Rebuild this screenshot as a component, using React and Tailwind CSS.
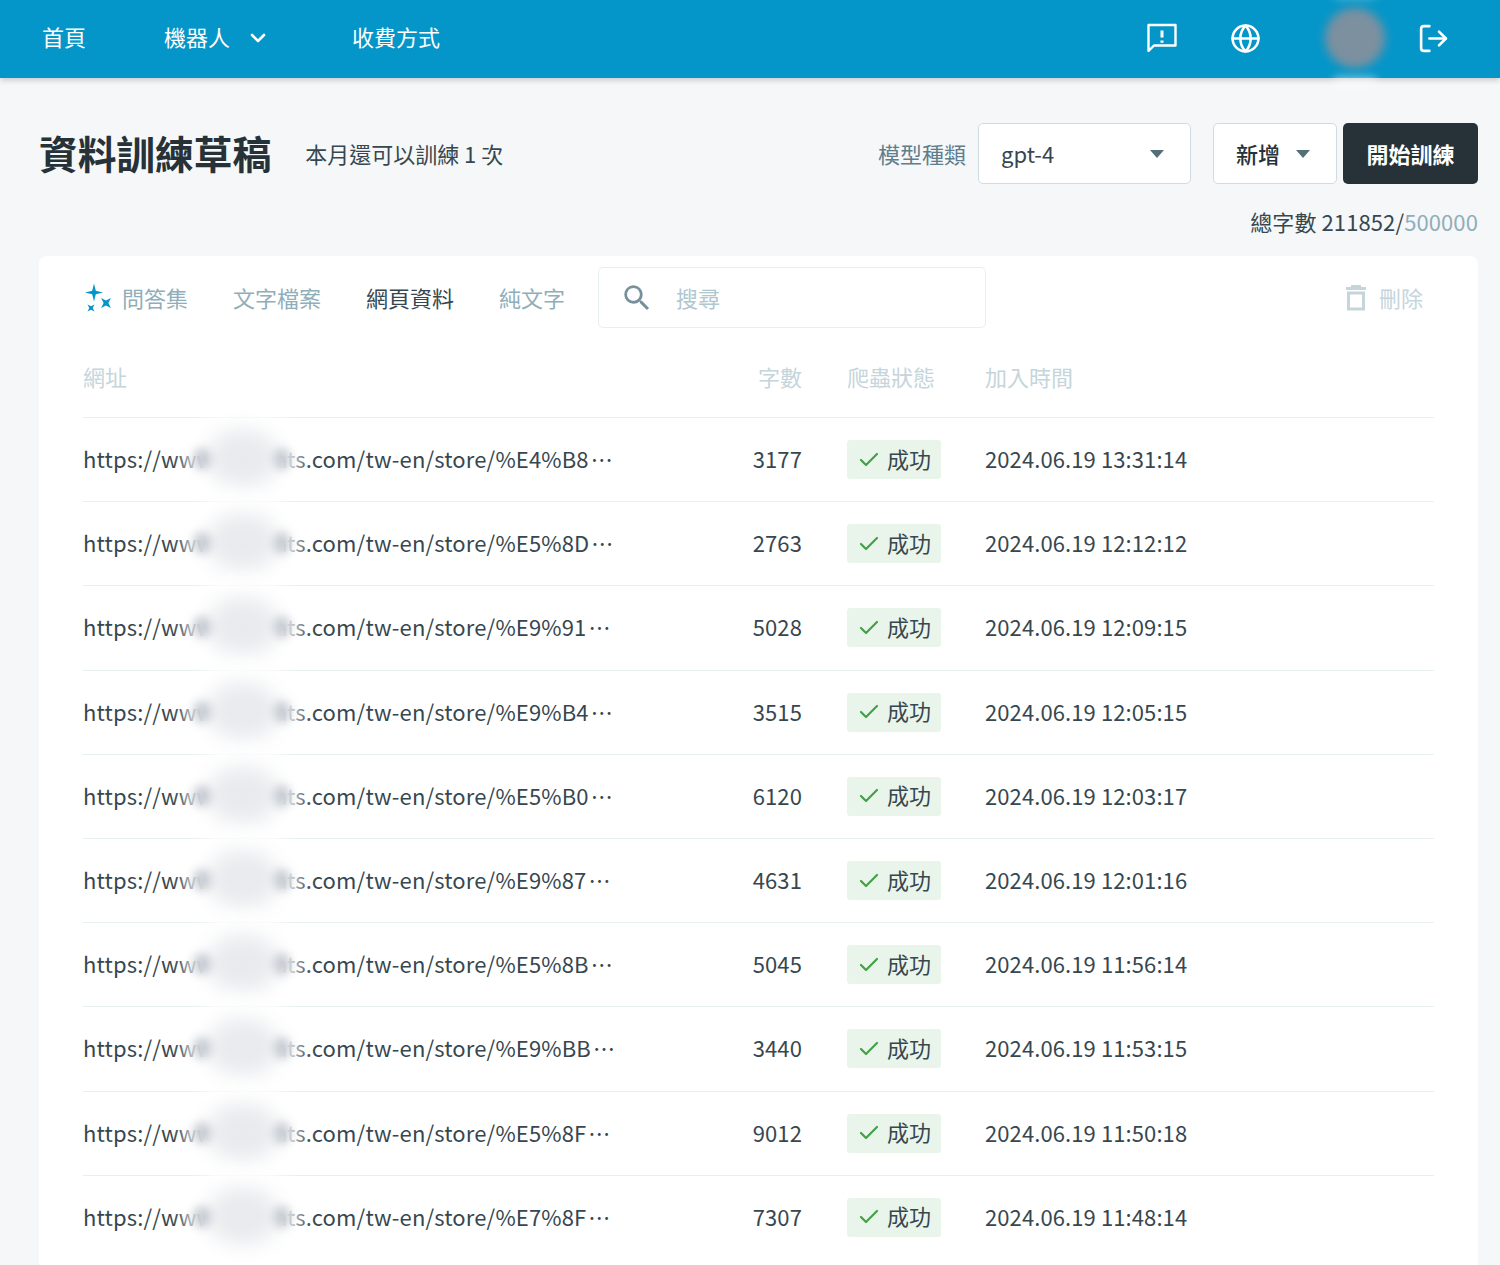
import { Check, ChevronDown, Globe, LogOut } from 'lucide-react'

const rows = [
  ['%E4%B8', '3177', '2024.06.19 13:31:14'],
  ['%E5%8D', '2763', '2024.06.19 12:12:12'],
  ['%E9%91', '5028', '2024.06.19 12:09:15'],
  ['%E9%B4', '3515', '2024.06.19 12:05:15'],
  ['%E5%B0', '6120', '2024.06.19 12:03:17'],
  ['%E9%87', '4631', '2024.06.19 12:01:16'],
  ['%E5%8B', '5045', '2024.06.19 11:56:14'],
  ['%E9%BB', '3440', '2024.06.19 11:53:15'],
  ['%E5%8F', '9012', '2024.06.19 11:50:18'],
  ['%E7%8F', '7307', '2024.06.19 11:48:14'],
]

function Caret({ className }) {
  return (
    <svg viewBox="0 0 14 8" className={className}>
      <path d="M0 0h14L7 8z" fill="currentColor" />
    </svg>
  )
}

function Sparkles() {
  return (
    <svg viewBox="0 0 30 30" className="h-[30px] w-[30px] text-[#0596c9]">
      <path d="M11 .5l1.8 7.2L20 9.5l-7.2 1.8L11 18.5l-1.8-7.2L2 9.5l7.2-1.8z" fill="currentColor" />
      <path d="M23 13l1.7 5.3L30 20l-5.3 1.7L23 27l-1.7-5.3L16 20l5.3-1.7z" fill="currentColor" transform="rotate(45 23 20)" />
      <path d="M8 20l1.2 3.8L13 25l-3.8 1.2L8 30l-1.2-3.8L3 25l3.8-1.2z" fill="currentColor" transform="rotate(45 8 25)" />
    </svg>
  )
}

function FeedbackIcon() {
  return (
    <svg viewBox="0 0 30 30" className="h-[30px] w-[30px]" fill="none" stroke="currentColor" strokeWidth="2.4" strokeLinejoin="round">
      <path d="M1.5 2h27v20.5H7L1.5 28z" />
      <path d="M15 7.5v7M15 17.5v2.2" strokeWidth="3" />
    </svg>
  )
}

function SearchIcon() {
  return (
    <svg viewBox="0 0 24 24" className="h-[34px] w-[34px] text-[#78909c]">
      <path
        fill="currentColor"
        d="M15.5 14h-.79l-.28-.27A6.471 6.471 0 0 0 16 9.5 6.5 6.5 0 1 0 9.5 16c1.61 0 3.09-.59 4.23-1.57l.27.28v.79l5 4.99L20.49 19l-4.99-5zm-6 0C7.01 14 5 11.99 5 9.5S7.01 5 9.5 5 14 7.01 14 9.5 11.99 14 9.5 14z"
      />
    </svg>
  )
}

function TrashIcon() {
  return (
    <svg viewBox="0 0 22 26" className="h-[26px] w-[22px]" fill="none" stroke="currentColor" strokeWidth="3">
      <path d="M1 3.5h20" />
      <path d="M6 1.5h10" />
      <path d="M3.5 8h15v16h-15z" />
    </svg>
  )
}

function TableRow({ row }) {
  return (
    <div className="grid h-[84.2px] grid-cols-[620px_99px_183px_1fr] items-center border-t border-[#e8eff1] text-[22px] tracking-[0.1px] text-[#37474f]">
      <div className="relative whitespace-nowrap pb-[2px] tracking-[0.15px]">
        https://www.xxxxxats.com/tw-en/store/{row[0]}
        <span className="ml-[2px] inline-block">…</span>
        <div className="absolute left-[104px] top-[-28px] h-[88px] w-[112px] rounded-full bg-white blur-[9px]" />
        <div className="absolute left-[125px] top-[-12px] h-[56px] w-[70px] rounded-full bg-gray-300/50 blur-[10px]" />
        <div className="absolute left-[110px] top-[6px] h-[22px] w-[18px] rounded-full bg-gray-400/50 blur-[5px]" />
        <div className="absolute left-[191px] top-[6px] h-[22px] w-[16px] rounded-full bg-gray-400/50 blur-[5px]" />
      </div>
      <div className="pb-[2px] text-right">{row[1]}</div>
      <div className="pl-[45px]">
        <div className="flex h-[39px] w-[94px] items-center gap-[6px] rounded-[3px] bg-[#e9f5ea] pl-[10px]">
          <Check className="h-[24px] w-[24px] text-[#43a047]" strokeWidth={2.2} />
          <span className="pb-[3px]">成功</span>
        </div>
      </div>
      <div className="pb-[2px]">{row[2]}</div>
    </div>
  )
}

export default function App() {
  return (
    <div className="h-[1265px] overflow-hidden bg-[#f5f7f9] font-['Noto_Sans_CJK_TC','Noto_Sans',sans-serif]">
      <header className="flex h-[78px] items-center bg-[#0596c9] pb-[2px] text-[22px] text-white shadow-[0_2px_6px_rgba(0,0,0,0.2)]">
        <span className="ml-[42px] pb-[4px]">首頁</span>
        <span className="ml-[78px] pb-[4px]">機器人</span>
        <ChevronDown className="ml-[16px] h-[24px] w-[24px]" strokeWidth={2.6} />
        <span className="ml-[82px] pb-[4px]">收費方式</span>
        <div className="ml-auto flex items-center">
          <FeedbackIcon />
          <Globe className="ml-[53px] h-[31px] w-[31px]" strokeWidth={2} />
          <div className="relative ml-[64px] h-[60px] w-[60px]">
            <div className="h-full w-full rounded-full bg-[#7c909f] blur-[5px]" />
            <div className="absolute left-[8px] top-[-19px] h-[10px] w-[44px] rounded-full bg-white/30 blur-[4px]" />
            <div className="absolute bottom-[-19px] left-[8px] h-[10px] w-[44px] rounded-full bg-white/50 blur-[4px]" />
          </div>
          <LogOut className="ml-[32px] mr-[50px] h-[33px] w-[33px]" strokeWidth={1.9} />
        </div>
      </header>

      <div className="flex items-center pl-[39px] pr-[22px] pt-[45px]">
        <h1 className="pb-[4px] text-[38.7px] font-bold leading-[56px] text-[#263238]">資料訓練草稿</h1>
        <span className="ml-[34px] text-[22px] text-[#37474f]">本月還可以訓練 1 次</span>
        <span className="ml-auto text-[22px] text-[#607d8b]">模型種類</span>
        <div className="ml-[12px] flex h-[61px] w-[213px] items-center justify-between rounded-[5px] border border-[#cfdde2] bg-white pl-[22px] pr-[26px] text-[22px] text-[#37474f]">
          gpt-4
          <Caret className="h-[8px] w-[14px] text-[#546e7a]" />
        </div>
        <div className="ml-[22px] flex h-[61px] w-[124px] items-center gap-[16px] rounded-[5px] border border-[#cfdde2] bg-white pl-[22px] text-[22px] font-medium text-[#263238]">
          新增
          <Caret className="h-[8px] w-[14px] text-[#546e7a]" />
        </div>
        <button className="ml-[6px] h-[61px] w-[135px] rounded-[5px] bg-[#263238] text-[22px] font-bold text-white">開始訓練</button>
      </div>

      <div className="pr-[22px] pt-[21px] text-right text-[22px] leading-[33px] tracking-[0.1px] text-[#37474f]">
        總字數 211852/<span className="text-[#90aeb9]">500000</span>
      </div>

      <main className="ml-[39px] mr-[22px] mt-[18px] rounded-t-[8px] bg-white px-[44px] pb-[40px] pt-[11px]">
        <div className="flex items-center text-[22px]">
          <Sparkles />
          <span className="ml-[9px] text-[#90aeb9]">問答集</span>
          <span className="ml-[45px] text-[#90aeb9]">文字檔案</span>
          <span className="ml-[45px] text-[#37474f]">網頁資料</span>
          <span className="ml-[45px] text-[#90aeb9]">純文字</span>
          <div className="ml-[33px] flex h-[61px] w-[388px] items-center rounded-[5px] border border-[#e8eff1] pl-[21px] text-[#b0c7cf]">
            <SearchIcon />
            <span className="ml-[22px]">搜尋</span>
          </div>
          <div className="ml-auto mr-[11px] flex items-center gap-[12px] text-[#c5d5db]">
            <TrashIcon />
            刪除
          </div>
        </div>

        <div className="mt-[18px] grid h-[71px] grid-cols-[620px_99px_183px_1fr] items-center pb-[10px] text-[22px] text-[#c5d5db]">
          <div>網址</div>
          <div className="text-right">字數</div>
          <div className="pl-[45px]">爬蟲狀態</div>
          <div>加入時間</div>
        </div>

        {rows.map((row) => (
          <TableRow key={row[0]} row={row} />
        ))}
      </main>
    </div>
  )
}
